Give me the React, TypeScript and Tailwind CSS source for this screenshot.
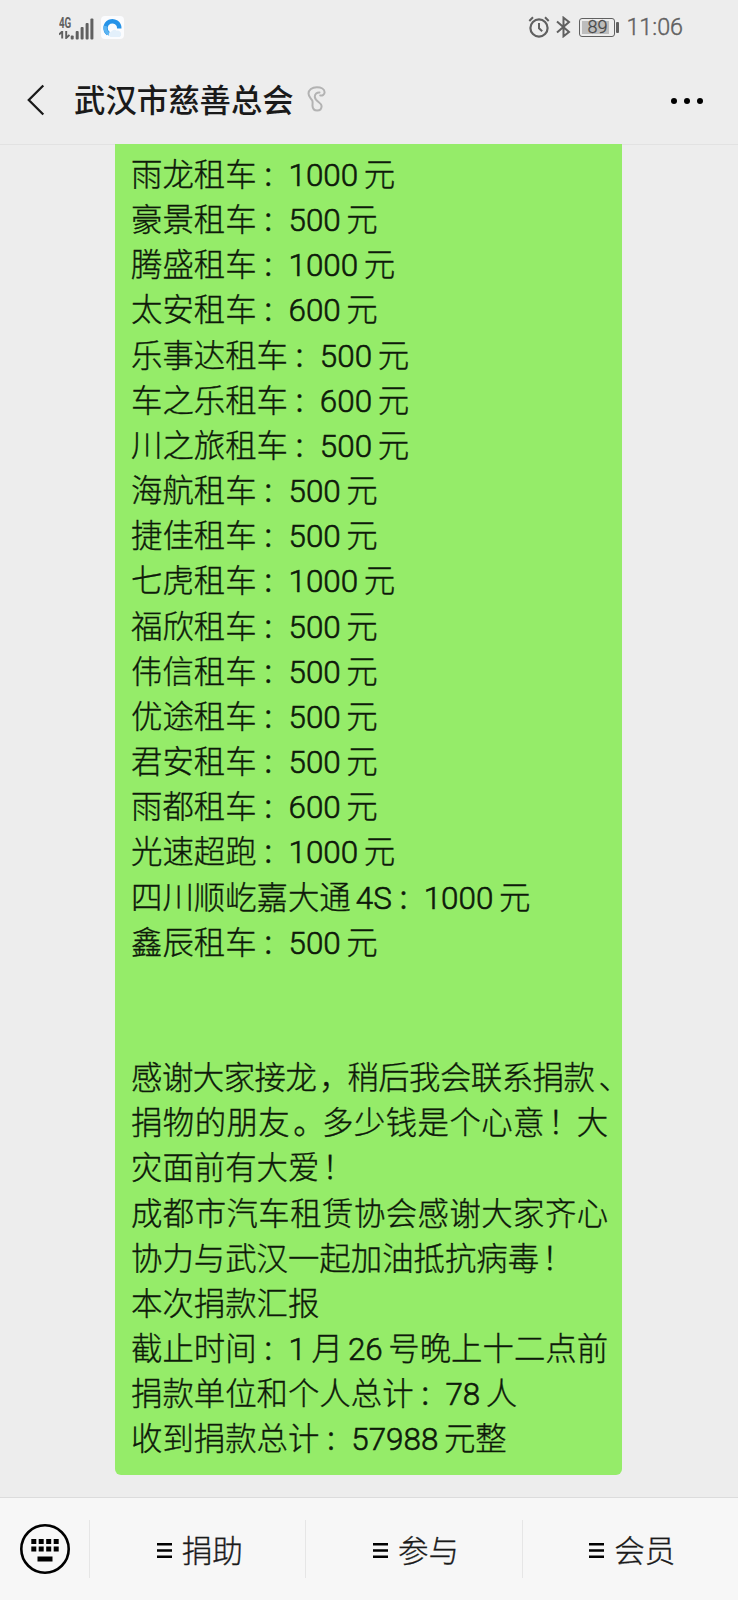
import React from 'react';

interface MessageLine {
  text: string;
  tracking?: string;
}

const messageLines: MessageLine[] = [
  { text: '雨龙租车：1000元' },
  { text: '豪景租车：500元' },
  { text: '腾盛租车：1000元' },
  { text: '太安租车：600元' },
  { text: '乐事达租车：500元' },
  { text: '车之乐租车：600元' },
  { text: '川之旅租车：500元' },
  { text: '海航租车：500元' },
  { text: '捷佳租车：500元' },
  { text: '七虎租车：1000元' },
  { text: '福欣租车：500元' },
  { text: '伟信租车：500元' },
  { text: '优途租车：500元' },
  { text: '君安租车：500元' },
  { text: '雨都租车：600元' },
  { text: '光速超跑：1000元' },
  { text: '四川顺屹嘉大通4S：1000元' },
  { text: '鑫辰租车：500元' },
  { text: '' },
  { text: '' },
  { text: '感谢大家接龙，稍后我会联系捐款、', tracking: 'tracking-[-0.5px]' },
  { text: '捐物的朋友。多少钱是个心意！大', tracking: 'tracking-[0.45px]' },
  { text: '灾面前有大爱！' },
  { text: '成都市汽车租赁协会感谢大家齐心', tracking: 'tracking-[0.45px]' },
  { text: '协力与武汉一起加油抵抗病毒！' },
  { text: '本次捐款汇报' },
  { text: '截止时间：1月26号晚上十二点前' },
  { text: '捐款单位和个人总计：78人' },
  { text: '收到捐款总计：57988元整' },
];

const menuItems = ['捐助', '参与', '会员'];

// Full-width punctuation sits further right in its cell than the font draws it
const punctuationClass: Record<string, string> = {
  '：': 'top-0 ml-[4.9px] text-[27px] leading-none',
  '，': 'left-[3px]',
  '、': 'left-[4px]',
  '。': 'left-[3px]',
  '！': 'left-[3px]',
};

// Latin runs get a small gap on each side that touches a Chinese character
const renderText = (text: string) => {
  const parts = text.split(/([0-9A-Z]+|[：，、。！])/).filter(Boolean);
  return parts.map((part, i) => {
    if (punctuationClass[part]) {
      return (
        <span key={i} className={`relative ${punctuationClass[part]}`}>
          {part}
        </span>
      );
    }
    if (!/^[0-9A-Z]+$/.test(part)) {
      return <span key={i}>{part}</span>;
    }
    const before = i > 0 && parts[i - 1] !== '：';
    const after = i < parts.length - 1 && parts[i + 1] !== '：';
    return (
      <span
        key={i}
        className={`font-['Roboto'] font-light [-webkit-text-stroke:0.6px] ${before ? 'ml-[5px]' : ''} ${after ? 'mr-[5.6px]' : ''}`}
      >
        {part}
      </span>
    );
  });
};

const SignalIcon: React.FC = () => (
  <div className="flex h-[24px] w-[36px] items-end">
    <div className="relative h-full w-[11px]">
      <span className="absolute left-0 top-0 origin-left scale-x-[0.7] font-['Roboto'] text-[14px] font-bold leading-[14px] text-[#606060]">
        4G
      </span>
      <svg className="absolute bottom-[1px] left-0" width="11" height="8" viewBox="0 0 11 8">
        <path d="M0 3.5L3.2 0.5V7.5M7.2 0V7L10.5 4" fill="none" stroke="#606060" strokeWidth="1.9" />
      </svg>
    </div>
    <svg width="24" height="22" viewBox="0 0 24 22" fill="#606060">
      <rect x="0.7" y="17.5" width="3" height="4" rx="1" />
      <rect x="5.7" y="13" width="3" height="8.5" rx="1" />
      <rect x="10.6" y="9" width="3" height="12.5" rx="1" />
      <rect x="15.6" y="5" width="3" height="16.5" rx="1" />
      <rect x="20.4" y="0.5" width="3" height="21" rx="1" />
    </svg>
  </div>
);

const BrowserBadge: React.FC = () => (
  <svg width="23" height="23" viewBox="0 0 23 23">
    <rect width="23" height="23" rx="4" fill="#fbfcfe" />
    <path d="M7.2 17.6A6.900 6.900 0 1 1 18.300 12.500" fill="none" stroke="#2693e8" strokeWidth="4.4" />
    <path d="M4.300 10A7.2 7.2 0 0 0 8.500 18.200" fill="none" stroke="#5cb4f1" strokeWidth="3.4" />
    <path d="M9.500 21a2.600 2.600 0 0 1 .4-5 3.600 3.600 0 0 1 5.800-1.200 3.300 3.300 0 0 1 4.400 3.200 2.500 2.500 0 0 1-1.500 3z" fill="#e3f0fb" />
  </svg>
);

const StatusBar: React.FC = () => (
  <div className="flex h-[56px] items-center justify-between pl-[59px] pr-[55px]">
    <div className="-mt-px flex items-center gap-[6px]">
      <SignalIcon />
      <BrowserBadge />
    </div>
    <div className="flex items-center text-[#606060]">
      <svg className="-mt-px" width="22" height="22" viewBox="0 0 22 22" fill="none" stroke="#606060">
        <circle cx="11" cy="12" r="8.6" strokeWidth="2.2" />
        <path d="M11 7v5.3l3.2 3" strokeWidth="2" />
        <path d="M1.3 5L5 1.3M17 1.3L20.7 5" strokeWidth="2" />
      </svg>
      <svg className="-mt-px ml-[6px]" width="15" height="22" viewBox="0 0 15 22" fill="none" stroke="#606060" strokeWidth="2">
        <path d="M1 5.5l12 10.5-5.5 4.3V1.7L13 6 1 16.5" />
      </svg>
      <div className="-mt-px ml-[8px] flex h-[19px] w-[36px] items-center rounded-[3px] border border-[#606060] p-[2px]">
        <div className="flex h-full w-[27px] items-center justify-center bg-[#bdbdbd] pl-[3px] font-['Roboto'] text-[18px] font-light leading-none text-[#484848] [-webkit-text-stroke:0.3px]">
          89
        </div>
      </div>
      <div className="-mt-px ml-[1px] h-[11px] w-[3px] rounded-[1px] bg-[#606060]" />
      <span className="ml-[7px] font-['Roboto'] text-[23.300px] font-light leading-none [-webkit-text-stroke:0.4px]">
        11:06
      </span>
    </div>
  </div>
);

const ChatHeader: React.FC = () => (
  <div className="flex h-[88px] items-center pl-[26px] pr-[35px]">
    <svg width="19" height="32" viewBox="0 0 19 32" fill="none" stroke="#1a1a1a" strokeWidth="2.3">
      <path d="M17.3 1.5L2.8 16l14.5 14.5" />
    </svg>
    <h1 className="relative -top-px ml-[29px] text-[31.4px] font-medium leading-none text-[#1a1a1a]">武汉市慈善总会</h1>
    <svg className="-mt-[2px] ml-[13px]" width="20" height="26" viewBox="0 0 20 26" fill="none" stroke="#b3b3b3" strokeWidth="2" strokeLinecap="round">
      <path d="M13.200 9.500C15.500 9.800 17.600 8.600 17.600 6.200 17.600 3 14.200 1.200 9.800 1.200 5 1.200 1.500 3.800 1.500 7.600c0 3.300 2.800 4.700 3.800 7.100.7 1.700.1 3.300.2 5.200.2 2.800 2 4.700 4.600 4.700 2.800 0 4.500-1.900 4.500-4.500 0-3.600-6.800-4.700-6.800-9.300 0-2.700 2.100-4.500 4.700-4.300" />
    </svg>
    <div className="ml-auto mt-[2px] flex gap-[7px]">
      <span className="h-[6px] w-[6px] rounded-full bg-black" />
      <span className="h-[6px] w-[6px] rounded-full bg-black" />
      <span className="h-[6px] w-[6px] rounded-full bg-black" />
    </div>
  </div>
);

const MessageBubble: React.FC = () => (
  <div className="ml-[115px] h-[1331px] w-[507px] rounded-b-[6px] bg-[#95ec69] pl-[16px] pt-[6px] text-[31.4px] font-light leading-[45.17px] text-[#0e1a0a] [-webkit-text-stroke:0.35px]">
    {messageLines.map((line, i) => (
      <p key={i} className={`h-[45.17px] whitespace-nowrap ${line.tracking ?? ''}`}>
        {renderText(line.text)}
      </p>
    ))}
  </div>
);

const BottomMenu: React.FC = () => (
  <div className="flex h-[103px] items-center border-t border-[#dcdcdc] bg-[#f7f7f7]">
    <div className="flex w-[89px] justify-center">
      <svg width="50" height="50" viewBox="0 0 50 50">
        <circle cx="25" cy="25" r="23.7" fill="none" stroke="#000" strokeWidth="2.6" />
        {[11.3, 18.7, 26.2, 33.7].map((x) => (
          <g key={x}>
            <rect x={x} y="15" width="5" height="5" />
            <rect x={x} y="22.5" width="5" height="5" />
          </g>
        ))}
        <rect x="17.5" y="32.5" width="15" height="5" />
      </svg>
    </div>
    {menuItems.map((label) => (
      <div key={label} className="flex h-[58px] flex-1 items-center justify-center border-l border-[#e6e6e6] pl-[4px] pt-[2px]">
        <svg width="15" height="15" viewBox="0 0 15 15">
          <path d="M0 1.2h15M0 7.5h15M0 13.8h15" stroke="#000" strokeWidth="2.4" />
        </svg>
        <span className="relative -top-px ml-[10px] text-[30.5px] font-light leading-none text-[#1a1a1a] [-webkit-text-stroke:0.35px]">
          {label}
        </span>
      </div>
    ))}
  </div>
);

const App: React.FC = () => {
  return (
    <div className="flex h-[1600px] w-[738px] flex-col overflow-hidden bg-[#ededed] font-['Noto_Sans_CJK_SC',sans-serif]">
      <StatusBar />
      <ChatHeader />
      <div className="flex-1 border-t border-[#e2e2e2]">
        <div className="-mt-px">
          <MessageBubble />
        </div>
      </div>
      <BottomMenu />
    </div>
  );
};

export default App;
